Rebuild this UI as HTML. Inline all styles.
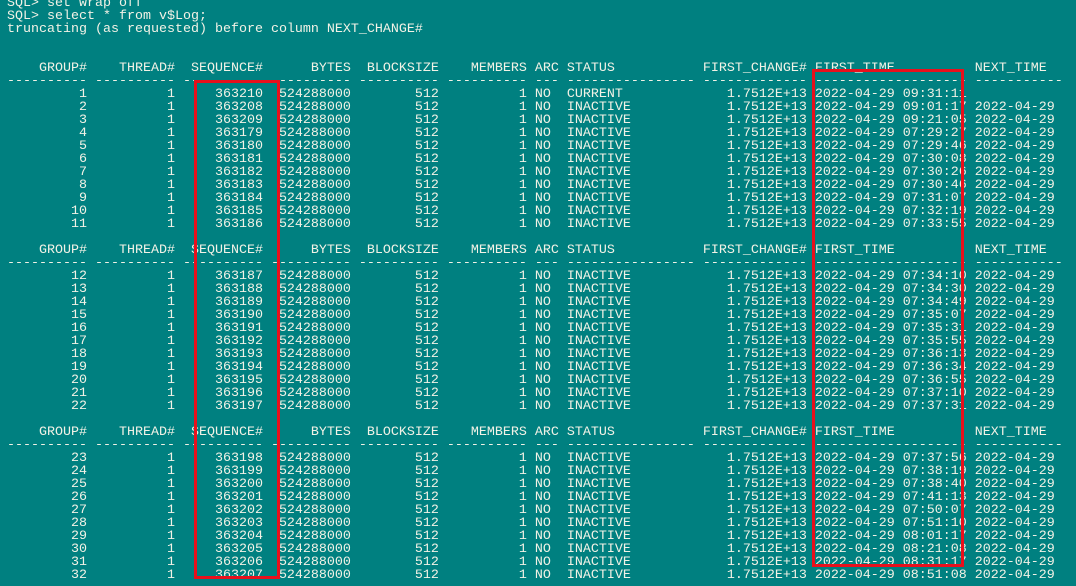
<!DOCTYPE html>
<html><head><meta charset="utf-8"><style>
html,body{margin:0;padding:0;width:1076px;height:586px;overflow:hidden;background:#008080;}
pre{position:absolute;left:7px;top:-3px;margin:0;font-family:"Liberation Mono",monospace;font-size:13.333px;line-height:13px;color:#f2f2e6;white-space:pre;}
.box{position:absolute;border:3px solid #e8101c;box-sizing:border-box;}
</style></head><body>
<pre>SQL&gt; set wrap off
SQL&gt; select * from v$Log;
truncating (as requested) before column NEXT_CHANGE#


    GROUP#    THREAD#  SEQUENCE#      BYTES  BLOCKSIZE    MEMBERS ARC STATUS           FIRST_CHANGE# FIRST_TIME          NEXT_TIME
---------- ---------- ---------- ---------- ---------- ---------- --- ---------------- ------------- ------------------- -----------
         1          1     363210  524288000        512          1 NO  CURRENT             1.7512E+13 2022-04-29 09:31:11
         2          1     363208  524288000        512          1 NO  INACTIVE            1.7512E+13 2022-04-29 09:01:17 2022-04-29
         3          1     363209  524288000        512          1 NO  INACTIVE            1.7512E+13 2022-04-29 09:21:05 2022-04-29
         4          1     363179  524288000        512          1 NO  INACTIVE            1.7512E+13 2022-04-29 07:29:27 2022-04-29
         5          1     363180  524288000        512          1 NO  INACTIVE            1.7512E+13 2022-04-29 07:29:46 2022-04-29
         6          1     363181  524288000        512          1 NO  INACTIVE            1.7512E+13 2022-04-29 07:30:08 2022-04-29
         7          1     363182  524288000        512          1 NO  INACTIVE            1.7512E+13 2022-04-29 07:30:26 2022-04-29
         8          1     363183  524288000        512          1 NO  INACTIVE            1.7512E+13 2022-04-29 07:30:46 2022-04-29
         9          1     363184  524288000        512          1 NO  INACTIVE            1.7512E+13 2022-04-29 07:31:07 2022-04-29
        10          1     363185  524288000        512          1 NO  INACTIVE            1.7512E+13 2022-04-29 07:32:19 2022-04-29
        11          1     363186  524288000        512          1 NO  INACTIVE            1.7512E+13 2022-04-29 07:33:55 2022-04-29

    GROUP#    THREAD#  SEQUENCE#      BYTES  BLOCKSIZE    MEMBERS ARC STATUS           FIRST_CHANGE# FIRST_TIME          NEXT_TIME
---------- ---------- ---------- ---------- ---------- ---------- --- ---------------- ------------- ------------------- -----------
        12          1     363187  524288000        512          1 NO  INACTIVE            1.7512E+13 2022-04-29 07:34:10 2022-04-29
        13          1     363188  524288000        512          1 NO  INACTIVE            1.7512E+13 2022-04-29 07:34:30 2022-04-29
        14          1     363189  524288000        512          1 NO  INACTIVE            1.7512E+13 2022-04-29 07:34:49 2022-04-29
        15          1     363190  524288000        512          1 NO  INACTIVE            1.7512E+13 2022-04-29 07:35:07 2022-04-29
        16          1     363191  524288000        512          1 NO  INACTIVE            1.7512E+13 2022-04-29 07:35:31 2022-04-29
        17          1     363192  524288000        512          1 NO  INACTIVE            1.7512E+13 2022-04-29 07:35:55 2022-04-29
        18          1     363193  524288000        512          1 NO  INACTIVE            1.7512E+13 2022-04-29 07:36:13 2022-04-29
        19          1     363194  524288000        512          1 NO  INACTIVE            1.7512E+13 2022-04-29 07:36:34 2022-04-29
        20          1     363195  524288000        512          1 NO  INACTIVE            1.7512E+13 2022-04-29 07:36:55 2022-04-29
        21          1     363196  524288000        512          1 NO  INACTIVE            1.7512E+13 2022-04-29 07:37:10 2022-04-29
        22          1     363197  524288000        512          1 NO  INACTIVE            1.7512E+13 2022-04-29 07:37:31 2022-04-29

    GROUP#    THREAD#  SEQUENCE#      BYTES  BLOCKSIZE    MEMBERS ARC STATUS           FIRST_CHANGE# FIRST_TIME          NEXT_TIME
---------- ---------- ---------- ---------- ---------- ---------- --- ---------------- ------------- ------------------- -----------
        23          1     363198  524288000        512          1 NO  INACTIVE            1.7512E+13 2022-04-29 07:37:56 2022-04-29
        24          1     363199  524288000        512          1 NO  INACTIVE            1.7512E+13 2022-04-29 07:38:19 2022-04-29
        25          1     363200  524288000        512          1 NO  INACTIVE            1.7512E+13 2022-04-29 07:38:40 2022-04-29
        26          1     363201  524288000        512          1 NO  INACTIVE            1.7512E+13 2022-04-29 07:41:13 2022-04-29
        27          1     363202  524288000        512          1 NO  INACTIVE            1.7512E+13 2022-04-29 07:50:07 2022-04-29
        28          1     363203  524288000        512          1 NO  INACTIVE            1.7512E+13 2022-04-29 07:51:10 2022-04-29
        29          1     363204  524288000        512          1 NO  INACTIVE            1.7512E+13 2022-04-29 08:01:17 2022-04-29
        30          1     363205  524288000        512          1 NO  INACTIVE            1.7512E+13 2022-04-29 08:21:08 2022-04-29
        31          1     363206  524288000        512          1 NO  INACTIVE            1.7512E+13 2022-04-29 08:31:17 2022-04-29
        32          1     363207  524288000        512          1 NO  INACTIVE            1.7512E+13 2022-04-29 08:51:08 2022-04-29
</pre>
<div class="box" style="left:194px;top:80px;width:86px;height:499px;"></div>
<div class="box" style="left:812px;top:69px;width:152px;height:498px;"></div>
</body></html>
